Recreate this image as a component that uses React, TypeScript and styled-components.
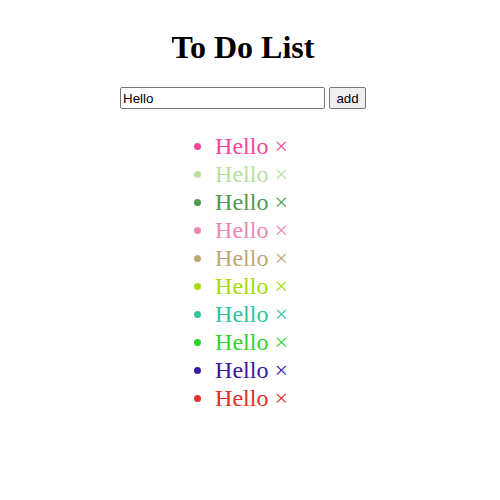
import React, { useState } from "react";
import styled, { createGlobalStyle } from "styled-components";

const Global = createGlobalStyle`
  body {
    margin: 8px;
    font-family: "Liberation Serif", "Times New Roman", serif;
    background: #fff;
  }
`;

const Page = styled.div`
  text-align: center;
  padding-right: 14px;
`;

const Title = styled.h1`
  font-size: 32px;
  font-weight: bold;
  margin: 21px 0;
  color: #000;
`;

const Form = styled.form`
  display: flex;
  justify-content: center;
  align-items: center;
  gap: 4px;
`;

const TextInput = styled.input`
  width: 205px;
  height: 22px;
  box-sizing: border-box;
  font-family: "Liberation Sans", Arial, sans-serif;
  font-size: 13.33px;
  padding: 1px 2px;
  border: 1px solid #767676;
  border-radius: 2px;
`;

const AddButton = styled.button`
  height: 22px;
  width: 37px;
  box-sizing: border-box;
  font-family: "Liberation Sans", Arial, sans-serif;
  font-size: 13.33px;
  padding: 1px 6px;
  border: 1px solid #767676;
  border-radius: 2px;
  background: #efefef;
  color: #000;
`;

const List = styled.ul`
  display: inline-block;
  text-align: left;
  list-style: disc outside;
  padding: 0 23px 0 40px;
  margin: 23px 0;
`;

const Item = styled.li<{ $color: string }>`
  font-size: 24px;
  line-height: 28px;
  color: ${(p) => p.$color};
`;

const Remove = styled.span`
  cursor: pointer;
`;

const colors = [
  "#f2479d",
  "#b8e0a0",
  "#4f9a4f",
  "#ea88b4",
  "#bba877",
  "#a3dc0c",
  "#2ec4a4",
  "#2ed42e",
  "#3a18a0",
  "#e0302a",
];

export default function App() {
  const [text, setText] = useState("Hello");
  const [items, setItems] = useState(colors.map((c) => ({ text: "Hello", color: c })));
  return (
    <Page>
      <Global />
      <Title>To Do List</Title>
      <Form
        onSubmit={(e) => {
          e.preventDefault();
          setItems([...items, { text, color: colors[items.length % colors.length] }]);
        }}
      >
        <TextInput value={text} onChange={(e) => setText(e.target.value)} />
        <AddButton type="submit">add</AddButton>
      </Form>
      <div>
        <List>
          {items.map((it, i) => (
            <Item key={i} $color={it.color}>
              {it.text} <Remove onClick={() => setItems(items.filter((_, j) => j !== i))}>×</Remove>
            </Item>
          ))}
        </List>
      </div>
    </Page>
  );
}
